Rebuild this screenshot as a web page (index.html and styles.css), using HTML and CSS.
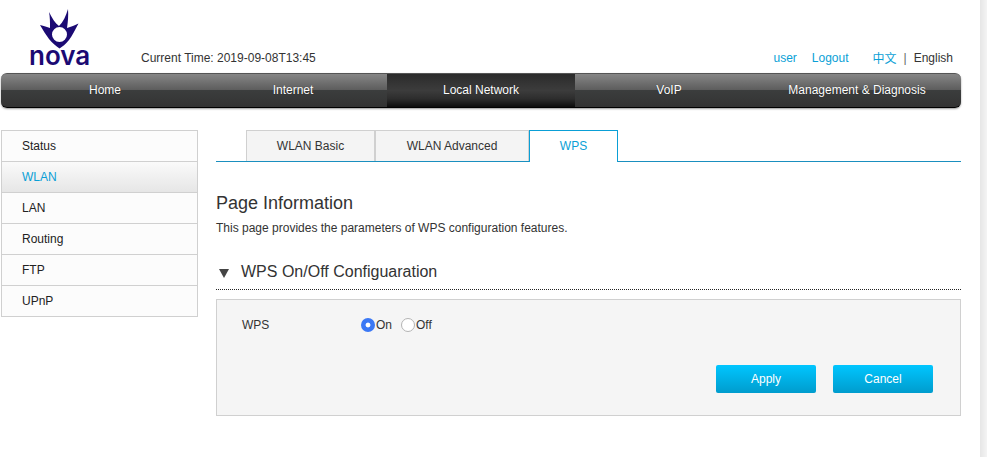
FILE: index.html
```html
<!DOCTYPE html>
<html lang="en">
<head>
<meta charset="utf-8">
<title>WPS</title>
<link rel="stylesheet" href="styles.css">
</head>
<body>
<div class="page">
  <header class="header">
    <div class="logo">
      <svg class="crown" viewBox="38 6 44 44" width="44" height="44" aria-hidden="true">
        <path fill-rule="evenodd" d="M40 25C44 26 47 27 50 28C50 22 50 17 49 12C52 18 55 23 59 26C63 22 66 16 68 9C68.500 15 68 22 67 28C71 27 75 25 78.500 23.500C75 30 72 36 69 40C66 44 62 47 59.500 48.500C56 46 52 43 49 39C46 35 43 30 40 25ZM59.500 27A7.500 7.500 0 1 0 59.500 42A7.500 7.500 0 1 0 59.500 27Z"/>
      </svg>
      <span class="wordmark">nova</span>
    </div>
    <div class="time">Current Time: 2019-09-08T13:45</div>
    <div class="userbar">
      <a class="link user">user</a>
      <a class="link logout">Logout</a>
      <a class="link lang">中文</a>
      <span class="sep">|</span>
      <span class="current-lang">English</span>
    </div>
  </header>
  <nav class="nav">
    <a class="nav-item">Home</a>
    <a class="nav-item">Internet</a>
    <a class="nav-item active">Local Network</a>
    <a class="nav-item">VoIP</a>
    <a class="nav-item">Management &amp; Diagnosis</a>
  </nav>
  <div class="main">
    <ul class="side">
      <li class="side-item">Status</li>
      <li class="side-item active">WLAN</li>
      <li class="side-item">LAN</li>
      <li class="side-item">Routing</li>
      <li class="side-item">FTP</li>
      <li class="side-item">UPnP</li>
    </ul>
    <section class="content">
      <div class="tabs">
        <a class="tab basic">WLAN Basic</a>
        <a class="tab adv">WLAN Advanced</a>
        <a class="tab wps active">WPS</a>
      </div>
      <h1 class="title">Page Information</h1>
      <p class="desc">This page provides the parameters of WPS configuration features.</p>
      <h2 class="section"><span class="arrow"></span>WPS On/Off Configuaration</h2>
      <form class="panel">
        <div class="row">
          <span class="label">WPS</span>
          <label class="opt"><input class="radio" type="radio" name="wps" checked>On</label>
          <label class="opt"><input class="radio" type="radio" name="wps">Off</label>
        </div>
        <div class="actions">
          <button class="btn" type="button">Apply</button>
          <button class="btn" type="button">Cancel</button>
        </div>
      </form>
    </section>
  </div>
</div>
<div class="strip"></div>
</body>
</html>
```

FILE: styles.css
```css
* { box-sizing: border-box; }
html, body { height: 100%; }
body {
  margin: 0;
  display: flex;
  overflow: hidden;
  background: #fff;
  color: #333;
  font: 12px/14px "Liberation Sans", Arial, sans-serif;
}
.page { width: 980px; flex: none; }
.strip {
  flex: 1;
  background: linear-gradient(to right, #e6e6e6, #f4f4f4);
}
.header {
  height: 73px;
  display: flex;
  align-items: flex-end;
  padding: 0 27px 8px 0;
}
.logo {
  width: 141px;
  padding-left: 29px;
  margin-bottom: 2px;
  display: flex;
  flex-direction: column;
  color: #1b0a73;
}
.crown { display: block; fill: #1b0a73; margin: 0 0 -2px 9px; }
.wordmark {
  font: 600 26px/15px Inter, sans-serif;
  height: 15px;
}
.time { color: #333; }
.userbar { margin-left: auto; display: flex; }
.link { color: #0a9fd6; }
.logout { margin-left: 15px; }
.lang { margin-left: 24px; font-family: "Noto Sans CJK SC", sans-serif; }
.sep { margin-left: 7px; color: #666; }
.current-lang { margin-left: 7px; }
.nav {
  margin-left: 1px;
  width: 960px;
  height: 35px;
  padding: 0 10px;
  display: flex;
  border-radius: 6px;
  border-top: 1px solid #555;
  border-bottom: 1px solid #000;
  background: linear-gradient(to bottom, #868686 0, #5c5c5c 49%, #3b3d3d 50%, #333 100%);
  box-shadow: 0 1px 2px rgba(0, 0, 0, .4);
}
.nav-item {
  width: 188px;
  flex: none;
  text-align: center;
  line-height: 32px;
  color: #fff;
  text-shadow: 0 0 1px rgba(0, 0, 0, .6);
}
.nav-item.active {
  background: linear-gradient(to bottom, #2b2b2b 0, #3c3c3c 50%, #2d2d2d 75%, #0c0c0c 100%);
}
.main {
  display: flex;
  padding: 22px 0 0 1px;
  align-items: flex-start;
}
.side {
  list-style: none;
  margin: 0;
  padding: 0;
  width: 197px;
  flex: none;
  border: 1px solid #d0d0d0;
  border-bottom-width: 0;
}
.side-item {
  height: 31px;
  padding-left: 20px;
  line-height: 30px;
  color: #222;
  background: #fcfcfc;
  border-bottom: 1px solid #d0d0d0;
}
.side-item.active {
  color: #0a9fd6;
  background: linear-gradient(to bottom, #fafafa, #e6e6e6);
}
.content { width: 745px; margin-left: 18px; }
.tabs {
  height: 32px;
  padding-left: 30px;
  display: flex;
  border-bottom: 1px solid #1a8fbf;
}
.tab {
  height: 31px;
  flex: none;
  text-align: center;
  line-height: 30px;
  background: #f4f4f4;
  border: 1px solid #d0d0d0;
  border-bottom: 0;
}
.basic { width: 129px; }
.adv { width: 154px; }
.wps { width: 89px; }
.tab.active {
  height: 32px;
  color: #0a9fd6;
  background: #fff;
  border-color: #0a9fd6;
}
.title {
  margin: 31px 0 0;
  font-size: 18px;
  font-weight: 400;
  line-height: 20px;
  color: #333;
}
.desc { margin: 8px 0 0; }
.section {
  margin: 27px 0 0;
  height: 28px;
  padding-left: 25px;
  position: relative;
  font-size: 16px;
  font-weight: 400;
  line-height: 20px;
  color: #333;
  border-bottom: 1px dotted #222;
}
.arrow {
  position: absolute;
  left: 3px;
  top: 7px;
  width: 0;
  height: 0;
  border-style: solid;
  border-width: 9px 5.500px 0;
  border-color: #444 transparent transparent;
}
.panel {
  margin-top: 9px;
  height: 117px;
  padding: 17px 27px 0 25px;
  background: #f5f5f5;
  border: 1px solid #d0d0d0;
}
.row { display: flex; align-items: center; height: 16px; }
.label { width: 119px; }
.opt { display: flex; align-items: center; margin-right: 9px; }
.opt:last-child { margin-right: 0; }
.radio {
  appearance: none;
  -webkit-appearance: none;
  margin: 0 1px 0 0;
  width: 14px;
  height: 14px;
  border-radius: 50%;
  border: 1px solid #b4b4b4;
  background: #fff;
}
.radio:checked {
  border: 0;
  background: radial-gradient(circle, #fff 0, #fff 2px, #3b78f5 2.800px);
}
.actions {
  display: flex;
  justify-content: flex-end;
  gap: 17px;
  margin-top: 32px;
}
.btn {
  width: 100px;
  height: 28px;
  padding: 0;
  border: 0;
  border-radius: 2px;
  color: #fff;
  font: 12px "Liberation Sans", Arial, sans-serif;
  background: linear-gradient(to bottom, #00c6ff, #009ccd);
}
```
